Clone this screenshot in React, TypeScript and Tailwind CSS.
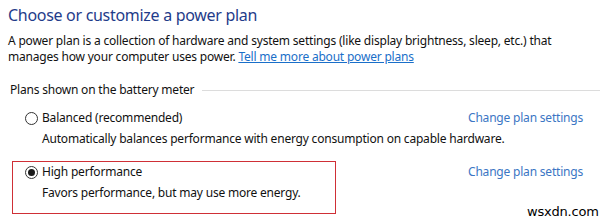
import React from "react";

function Radio({ checked }: { checked?: boolean }) {
  return (
    <span className="flex h-[13px] w-[13px] shrink-0 items-center justify-center rounded-full border border-[#333333] bg-white">
      {checked && <span className="h-[7px] w-[7px] rounded-full bg-[#1a1a1a]" />}
    </span>
  );
}

export default function App() {
  return (
    <div
      className="relative h-[222px] w-[600px] overflow-hidden bg-white text-[12px] leading-[16px] tracking-[-0.2px] text-[#111111]"
      style={{ fontFamily: '"Noto Sans", "Open Sans", sans-serif' }}
    >
      <h1 className="whitespace-nowrap pl-[8px] pt-[3px] text-[16px] leading-[24px] font-normal tracking-[-0.3px] text-[#1f3c8a]">
        Choose or customize a power plan
      </h1>
      <p className="mt-[6px] whitespace-nowrap pl-[8px]">
        A power plan is a collection of hardware and system settings (like display brightness, sleep, etc.) that
        <br />
        manages how your computer uses power.{" "}
        <span className="text-[#1a6fc9] underline">Tell me more about power plans</span>
      </p>

      <div className="mt-[17px] flex items-center pl-[10px]">
        <span className="whitespace-nowrap">Plans shown on the battery meter</span>
        <span className="ml-[8px] h-px flex-1 bg-[#dcdcdc]" />
      </div>

      <div className="mt-[12px] pl-[25px]">
        <div className="flex items-center">
          <Radio />
          <span className="ml-[4px]">Balanced (recommended)</span>
          <span className="ml-auto mr-[17px] text-[#3b76c4]">Change plan settings</span>
        </div>
        <div className="mt-[5px] whitespace-nowrap pl-[17px]">
          Automatically balances performance with energy consumption on capable hardware.
        </div>
      </div>

      <div className="mt-[14px] flex items-start pl-[12px]">
        <div className="w-[324px] border border-[#cf2f36] pb-[12px] pl-[12px] pt-[2px]">
          <div className="flex items-center">
            <Radio checked />
            <span className="ml-[4px]">High performance</span>
          </div>
          <div className="mt-[5px] pl-[17px]">Favors performance, but may use more energy.</div>
        </div>
        <span className="ml-auto mr-[17px] mt-[3px] text-[#3b76c4]">Change plan settings</span>
      </div>

      <span
        className="absolute left-[527px] top-[204px] text-[13px] leading-[16px] text-black"
        style={{ fontFamily: '"DejaVu Sans", sans-serif' }}
      >
        wsxdn.com
      </span>
    </div>
  );
}
